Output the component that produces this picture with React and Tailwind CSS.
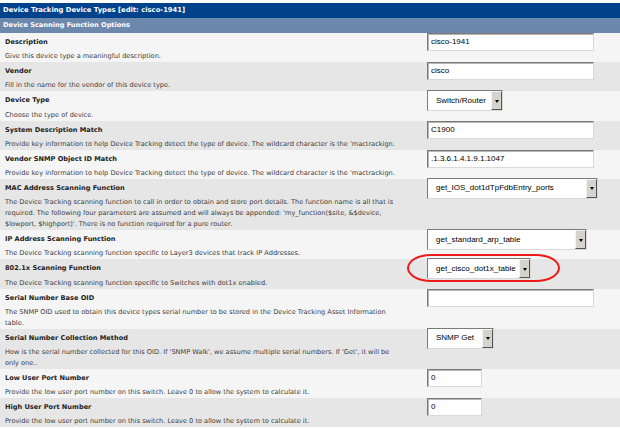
import React from "react";

const DESC_MATCH =
  "Provide key information to help Device Tracking detect the type of device. The wildcard character is the 'mactrackign.";
const PORT_DESC =
  "Provide the low user port number on this switch. Leave 0 to allow the system to calculate it.";

const rows = [
  { label: "Description", desc: ["Give this device type a meaningful description."], ctrl: { kind: "input", value: "cisco-1941", w: "w-[167px]" } },
  { label: "Vendor", desc: ["Fill in the name for the vendor of this device type."], ctrl: { kind: "input", value: "cisco", w: "w-[167px]" } },
  { label: "Device Type", desc: ["Choose the type of device."], ctrl: { kind: "select", value: "Switch/Router", w: "w-[76px]" } },
  { label: "System Description Match", desc: [DESC_MATCH], ctrl: { kind: "input", value: "C1900", w: "w-[167px]" } },
  { label: "Vendor SNMP Object ID Match", desc: [DESC_MATCH], ctrl: { kind: "input", value: ".1.3.6.1.4.1.9.1.1047", w: "w-[167px]" } },
  {
    label: "MAC Address Scanning Function",
    desc: [
      "The Device Tracking scanning function to call in order to obtain and store port details. The function name is all that is",
      "required. The following four parameters are assumed and will always be appended: 'my_function($site, &$device,",
      "$lowport, $highport)'. There is no function required for a pure router.",
    ],
    ctrl: { kind: "select", value: "get_IOS_dot1dTpFdbEntry_ports", w: "w-[171px]" },
  },
  {
    label: "IP Address Scanning Function",
    desc: ["The Device Tracking scanning function specific to Layer3 devices that track IP Addresses."],
    ctrl: { kind: "select", value: "get_standard_arp_table", w: "w-[160px]" },
  },
  {
    label: "802.1x Scanning Function",
    desc: ["The Device Tracking scanning function specific to Switches with dot1x enabled."],
    ctrl: { kind: "select", value: "get_cisco_dot1x_table", w: "w-[104px]", mark: true },
  },
  {
    label: "Serial Number Base OID",
    desc: [
      "The SNMP OID used to obtain this device types serial number to be stored in the Device Tracking Asset Information",
      "table.",
    ],
    ctrl: { kind: "input", value: "", w: "w-[167px]" },
  },
  {
    label: "Serial Number Collection Method",
    desc: [
      "How is the serial number collected for this OID. If 'SNMP Walk', we assume multiple serial numbers. If 'Get', it will be",
      "only one..",
    ],
    ctrl: { kind: "select", value: "SNMP Get", w: "w-[67px]" },
  },
  { label: "Low User Port Number", desc: [PORT_DESC], ctrl: { kind: "input", value: "0", w: "w-[55px]" } },
  { label: "High User Port Number", desc: [PORT_DESC], ctrl: { kind: "input", value: "0", w: "w-[55px]" } },
];

function TextBox({ value, w }) {
  return (
    <div
      className={`${w} h-[18px] bg-white border border-t-[#7a7a7a] border-l-[#7a7a7a] border-r-[#d9d9d9] border-b-[#d9d9d9] shadow-[inset_1px_1px_0_#b5b5b5] flex items-center pl-[3px] text-[8px] text-black font-['Liberation_Sans',Arial,sans-serif] whitespace-nowrap`}
    >
      {value}
    </div>
  );
}

function SelectBox({ value, w, mark }) {
  return (
    <div className="relative">
      {mark && (
        <div className="absolute left-[-20px] top-[-4px] w-[153px] h-[28px] border-[2.5px] border-[#ee1a1a] rounded-[24px/14px]" />
      )}
      <div
        className={`${w} h-[21px] bg-white border border-t-[#7a7a7a] border-l-[#7a7a7a] border-r-[#d9d9d9] border-b-[#d9d9d9] flex items-stretch`}
      >
        <div className="flex-1 flex items-center pl-[8px] text-[8px] text-black font-['Liberation_Sans',Arial,sans-serif] whitespace-nowrap overflow-hidden">
          {value}
        </div>
        <div className="w-[11px] bg-[#d6d3cc] border border-t-[#f4f4f4] border-l-[#f4f4f4] border-r-[#555] border-b-[#555] flex items-center justify-center">
          <div className="w-0 h-0 border-l-[2.5px] border-r-[2.5px] border-t-[3px] border-l-transparent border-r-transparent border-t-black mt-[1px]" />
        </div>
      </div>
    </div>
  );
}

export default function App() {
  return (
    <div className="w-[620px] h-[429px] bg-white pt-[3px] overflow-hidden font-['DejaVu_Sans',Verdana,sans-serif]">
      <div className="h-[15px] bg-[#00438c] flex items-center pl-[3px] text-white font-bold text-[6.8px] whitespace-nowrap">
        Device Tracking Device Types [edit: cisco-1941]
      </div>
      <div className="h-[15px] bg-[#6d88ad] flex items-center pl-[3px] text-white font-bold text-[6.6px] whitespace-nowrap">
        Device Scanning Function Options
      </div>
      {rows.map((r, i) => (
        <div key={i} className={`flex ${i % 2 === 0 ? "bg-[#f5f5f5]" : "bg-[#e6e6e6]"}`}>
          <div className="w-[427px] pl-[5px] pt-[3px] text-[6.6px] whitespace-nowrap">
            <div className="leading-[13px] font-bold text-[#222]">{r.label}</div>
            <div className="mt-[2.2px] leading-[11px] text-[#3c3c3c]">
              {r.desc.map((d, j) => (
                <div key={j}>{d}</div>
              ))}
            </div>
          </div>
          <div className={r.ctrl.kind === "select" ? "mt-[-1px]" : "pt-[0px]"}>
            {r.ctrl.kind === "input" ? <TextBox {...r.ctrl} /> : <SelectBox {...r.ctrl} />}
          </div>
        </div>
      ))}
    </div>
  );
}
